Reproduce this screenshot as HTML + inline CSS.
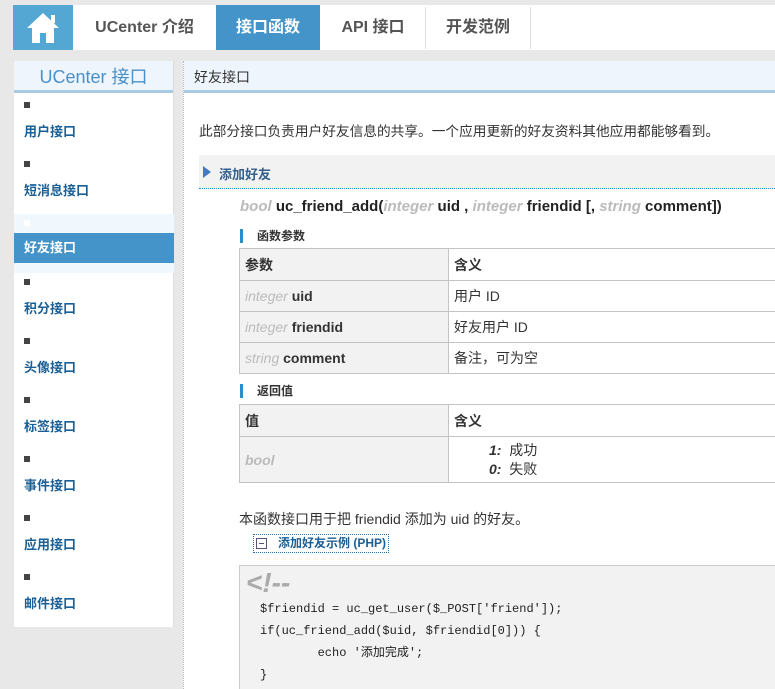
<!DOCTYPE html>
<html><head><meta charset="utf-8"><style>
*{margin:0;padding:0;box-sizing:border-box}
html,body{width:775px;height:689px;overflow:hidden}
body{background:#e8e8e8;font-family:"Liberation Sans","Noto Sans CJK SC",sans-serif;font-size:13px;color:#333;position:relative}
.abs{position:absolute}
#nav{left:73px;top:5px;width:702px;height:45px;background:#fff}
.tab{position:absolute;top:5px;height:45px;line-height:45px;text-align:center;font-size:16px;font-weight:bold;color:#555}
.sep{position:absolute;top:7px;width:1px;height:42px;background:#ddd}
#side{left:14px;top:61px;width:160px;height:566px;background:#fff;border-right:1px solid #ddd}
.sh{height:32px;background:#eef5fc;border-bottom:3px solid #a9cbe4;text-align:center;line-height:32px;font-size:18px;color:#4a90c8}
.it{position:absolute;left:0;width:160px;height:59px}
.it i{position:absolute;left:10px;top:6px;width:6px;height:6px;background:#444}
.it b{position:absolute;left:10px;top:25px;font-size:13px;color:#1a5f95}
#main{left:183px;top:61px;width:592px;height:640px;background:#fff;border-left:1px dotted #bbb}
.mh{height:32px;background:#eef5fc;border-bottom:3px solid #a9cbe4;line-height:32px;padding-left:10px;font-size:14px;color:#333}
table{border-collapse:collapse;position:absolute;left:239px;width:540px}
td{border:1px solid #c4c4c4;padding:0 5px;font-size:14px}
td.l{background:#f2f2f2;width:209px}
.g{color:#bbb;font-style:italic}
.lab{position:absolute;left:240px;border-left:3px solid #2a8fc9;padding-left:14px;font-size:12px;font-weight:bold;height:14px;line-height:14px}
pre{font-family:"Liberation Mono","Noto Sans CJK SC",monospace}
</style></head><body>
<div class="abs" style="left:13px;top:5px;width:60px;height:45px;background:#54a6d3">
<svg width="60" height="45"><path d="M30 8 L14 23 L19 23 L19 38 L27 38 L27 28 L33 28 L33 38 L41 38 L41 23 L46 23 Z" fill="#fff"/><rect x="38" y="10" width="4" height="8" fill="#fff"/></svg></div>
<div class="abs" id="nav"></div>
<div class="tab" style="left:73px;width:143px">UCenter 介绍</div>
<div class="tab" style="left:216px;width:104px;background:#4594c9;color:#fff">接口函数</div>
<div class="tab" style="left:320px;width:106px">API 接口</div>
<div class="sep" style="left:425px"></div>
<div class="tab" style="left:426px;width:104px">开发范例</div>
<div class="sep" style="left:530px"></div>

<div class="abs" id="side"><div class="sh">UCenter 接口</div>
<div class="it" style="top:35px"><i></i><b>用户接口</b></div>
<div class="it" style="top:94px"><i></i><b>短消息接口</b></div>
<div class="it" style="top:153px;background:#f0f8fd"><i style="background:#fff"></i></div>
<div class="abs" style="left:0;top:172px;width:160px;height:30px;background:#4594c9;color:#fff;font-weight:bold;line-height:30px;padding-left:10px;font-size:13px">好友接口</div>
<div class="it" style="top:212px"><i></i><b>积分接口</b></div>
<div class="it" style="top:271px"><i></i><b>头像接口</b></div>
<div class="it" style="top:330px"><i></i><b>标签接口</b></div>
<div class="it" style="top:389px"><i></i><b>事件接口</b></div>
<div class="it" style="top:448px"><i></i><b>应用接口</b></div>
<div class="it" style="top:507px"><i></i><b>邮件接口</b></div>
</div>

<div class="abs" id="main"><div class="mh">好友接口</div></div>
<div class="abs" style="left:199px;top:120px;font-size:13.7px">此部分接口负责用户好友信息的共享。一个应用更新的好友资料其他应用都能够看到。</div>
<div class="abs" style="left:199px;top:155px;width:576px;height:34px;background:#f2f2f2;border-bottom:1px dotted #2a8fc9">
<svg class="abs" style="left:4px;top:11px" width="8" height="12"><path d="M0 0 L8 6 L0 12Z" fill="#3a7cc6"/></svg>
<span class="abs" style="left:20px;top:9px;font-weight:bold;color:#335f8c;font-size:13px">添加好友</span></div>
<div class="abs" style="left:240px;top:198px;font-size:15px;font-weight:bold;color:#222"><span class="g">bool</span> uc_friend_add(<span class="g">integer</span> uid , <span class="g">integer</span> friendid [, <span class="g">string</span> comment])</div>
<div class="lab" style="top:229px">函数参数</div>
<table style="top:248px">
<tr style="height:32px"><td class="l"><b>参数</b></td><td><b>含义</b></td></tr>
<tr style="height:31px"><td class="l"><span class="g">integer</span> <b>uid</b></td><td>用户 ID</td></tr>
<tr style="height:31px"><td class="l"><span class="g">integer</span> <b>friendid</b></td><td>好友用户 ID</td></tr>
<tr style="height:31px"><td class="l"><span class="g">string</span> <b>comment</b></td><td>备注，可为空</td></tr>
</table>
<div class="lab" style="top:384px">返回值</div>
<table style="top:404px">
<tr style="height:32px"><td class="l"><b>值</b></td><td><b>含义</b></td></tr>
<tr style="height:46px"><td class="l"><b class="g">bool</b></td><td style="padding-left:40px;line-height:19px"><b><i>1:</i></b>&nbsp; 成功<br><b><i>0:</i></b>&nbsp; 失败</td></tr>
</table>
<div class="abs" style="left:239px;top:509px;font-size:14px">本函数接口用于把 friendid 添加为 uid 的好友。</div>
<div class="abs" style="left:253px;top:534px;width:136px;height:19px;border:1px dotted #2a6fa8;font-size:12px;font-weight:bold;color:#1a5f95;line-height:17px;padding-left:24px">添加好友示例 (PHP)
<span class="abs" style="left:2px;top:3px;width:11px;height:11px;border:1px solid #557;"><span class="abs" style="left:2px;top:4px;width:5px;height:1px;background:#557"></span></span></div>
<div class="abs" style="left:239px;top:565px;width:540px;height:130px;background:#f2f2f2;border:1px solid #ccc">
<div class="abs" style="left:6px;top:2px;font-size:28px;font-weight:bold;font-style:italic;color:#aaa;line-height:30px">&lt;!--</div>
<pre class="abs" style="left:20px;top:32px;font-size:12px;line-height:22px;color:#222">$friendid = uc_get_user($_POST['friend']);
if(uc_friend_add($uid, $friendid[0])) {
	echo '添加完成';
}</pre></div>
</body></html>
